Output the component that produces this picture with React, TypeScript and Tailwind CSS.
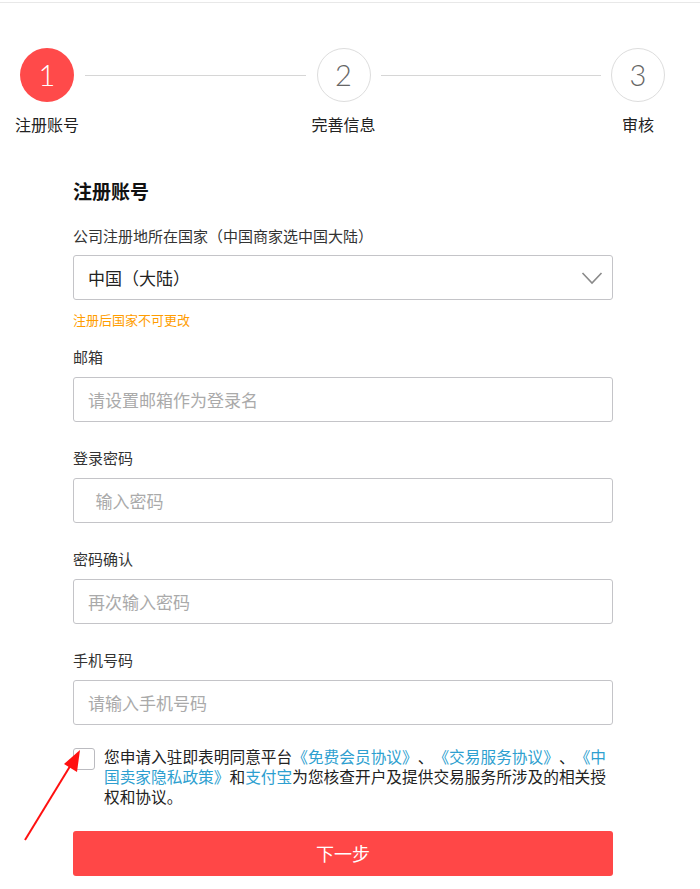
const font = { fontFamily: '"Microsoft YaHei", "Noto Sans CJK SC", "Noto Sans", sans-serif' };

function Step({ n, label, active }: { n: number; label: string; active?: boolean }) {
  return (
    <div className="relative flex h-[54px] w-[54px] shrink-0 justify-center">
      <div
        className={
          active
            ? 'flex h-[54px] w-[54px] items-center justify-center rounded-full bg-[#ff4a4a] font-["Lato",sans-serif] text-[29px] font-light text-white'
            : 'flex h-[54px] w-[54px] items-center justify-center rounded-full border border-[#dddddd] bg-white font-["Lato",sans-serif] text-[29px] font-light text-[#666]'
        }
      >
        {n}
      </div>
      <div className="absolute top-[64px] whitespace-nowrap text-[16px] text-[#222]">{label}</div>
    </div>
  );
}

function Field({ label, placeholder }: { label: string; placeholder: string }) {
  return (
    <div className="mt-[24px] first:mt-[15px]">
      <div className="text-[15px] leading-[24px] text-[#333]">{label}</div>
      <div className="mt-[8px] flex h-[45px] items-center whitespace-pre rounded-[3px] border border-[#c4c4c8] px-[14px] text-[17px] text-[#aaa]">
        {placeholder}
      </div>
    </div>
  );
}

export default function App() {
  return (
    <div className="relative min-h-[889px] w-[700px] bg-white" style={font}>
      <div className="h-[3px] border-b border-[#e8e8e8]" />

      {/* steps */}
      <div className="flex items-center px-[20px] pt-[45px] pr-[35px]">
        <Step n={1} label="注册账号" active />
        <div className="mx-[11px] h-px flex-1 bg-[#d6d6d6]" />
        <Step n={2} label="完善信息" />
        <div className="mx-[10px] h-px flex-1 bg-[#d6d6d6]" />
        <Step n={3} label="审核" />
      </div>

      {/* form */}
      <div className="mx-[73px] mt-[75px] w-[540px]">
        <div className="text-[19px] font-bold leading-[28px] text-[#111]">注册账号</div>
        <div className="mt-[19px] text-[15px] leading-[24px] text-[#333]">公司注册地所在国家（中国商家选中国大陆）</div>
        <div className="mt-[7px] flex h-[45px] items-center justify-between rounded-[3px] border border-[#c4c4c8] pl-[14px] pr-[9px] text-[17px] text-[#222]">
          <span>中国（大陆）</span>
          <svg width="22" height="14" viewBox="0 0 22 14" className="text-[#8a8a8a]">
            <polyline points="1.5,2 11,12 20.5,2" fill="none" stroke="currentColor" strokeWidth="1.6" />
          </svg>
        </div>
        <div className="mt-[10px] text-[13px] leading-[20px] text-[#ff9d00]">注册后国家不可更改</div>

        <div>
          <Field label="邮箱" placeholder="请设置邮箱作为登录名" />
          <Field label="登录密码" placeholder="  输入密码" />
          <Field label="密码确认" placeholder="再次输入密码" />
          <Field label="手机号码" placeholder="请输入手机号码" />
        </div>

        <div className="mt-[22px] flex items-start gap-[9px]">
          <div className="mt-[1px] h-[22px] w-[22px] shrink-0 rounded-[3px] border border-[#bbbbc0] bg-white" />
          <p className="text-[15.7px] leading-[20px] text-[#222] [text-spacing-trim:space-all]">
            您申请入驻即表明同意平台<span className="text-[#2e9fd0]">《免费会员协议》</span>、<span className="text-[#2e9fd0]">《交易服务协议》</span>、<span className="text-[#2e9fd0]">《中国卖家隐私政策》</span>和<span className="text-[#2e9fd0]">支付宝</span>为您核查开户及提供交易服务所涉及的相关授权和协议。
          </p>
        </div>

        <button className="mt-[24px] flex h-[45px] w-full items-center justify-center rounded-[3px] bg-[#ff4747] text-[18px] text-white">
          下一步
        </button>
      </div>

      {/* red annotation arrow */}
      <svg className="absolute left-[20px] top-[745px]" width="70" height="100" viewBox="0 0 70 100">
        <line x1="5" y1="95" x2="52" y2="18" stroke="#ff1010" strokeWidth="2" />
        <polygon points="60,5 44,19 57,27" fill="#ff1010" />
      </svg>
    </div>
  );
}
